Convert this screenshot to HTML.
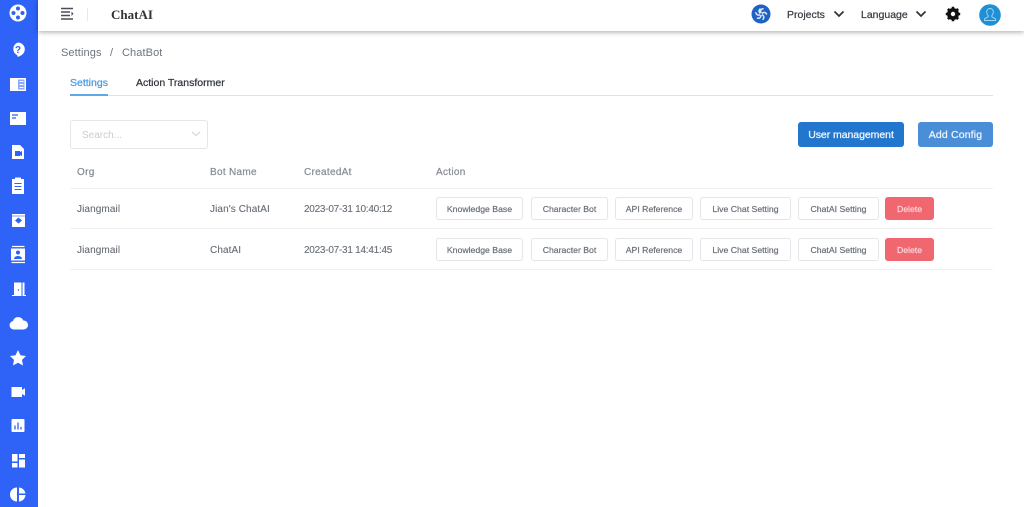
<!DOCTYPE html>
<html><head><meta charset="utf-8"><style>
html,body{margin:0;padding:0;width:1024px;height:507px;overflow:hidden;background:#fff}
body{position:relative;font-family:"Liberation Sans",sans-serif;}
#w{position:absolute;left:0;top:0;width:1024px;height:507px;filter:blur(.3px)}
.t{position:absolute;white-space:nowrap;line-height:14px;height:14px}
.b{position:absolute;box-sizing:border-box;height:23px;border:1px solid #e4e6ea;border-radius:3px;background:#fff;color:#6a7079;font-size:8.700px;line-height:22px;text-align:center;white-space:nowrap;-webkit-text-stroke:.2px #6a7079;box-shadow:0 0 1px rgba(0,0,0,.05)}
.d{background:#f1676f;border-color:#f1676f;color:#fbdde0;-webkit-text-stroke:.15px #fbdde0}
.h{color:#8a8f97;font-size:10px;letter-spacing:.3px;-webkit-text-stroke:.25px #8a8f97}
.c{color:#666c75;font-size:10px;letter-spacing:.1px;-webkit-text-stroke:.1px #666c75}
.m{font-size:10.500px;-webkit-text-stroke:.25px currentColor}
.l{position:absolute;left:70px;width:923px;height:1px;background:#eef0f2}
svg{position:absolute}
</style></head><body><div id="w">
<div style="position:absolute;left:0;top:0;width:38px;height:507px;background:#2f62f6"></div>
<div style="position:absolute;left:38px;top:0;width:986px;height:31px;background:#fff;box-shadow:0 1px 5px rgba(0,0,0,.35)"></div>

<svg width="38" height="507" style="left:0;top:0" fill="#fff">
<circle cx="18" cy="13" r="8.500"/>
<g fill="#2f62f6"><circle cx="18" cy="8.500" r="2"/><circle cx="18" cy="17.500" r="2"/><circle cx="13.500" cy="13" r="2"/><circle cx="22.500" cy="13" r="2"/></g>
<path d="M18 42.500a6.800 6.800 0 0 1 3.600 12.600L18 57l-1-2a6.800 6.800 0 0 1 1-12.500z"/>
<text x="18" y="53" font-size="10" font-weight="700" text-anchor="middle" fill="#2f62f6" font-family="Liberation Sans">?</text>
<path d="M10 78h16v13H10z"/><path d="M18 79.500h6.500v10H18z" fill="#2f62f6" opacity=".55"/><path d="M19.500 81.500h4M19.500 84.500h4M19.500 87.500h4" stroke="#fff" fill="none"/>
<path d="M10 112h16v13H10z"/><path d="M12 115h6M12 118h4" stroke="#2f62f6" stroke-width="1.200" fill="none"/>
<path d="M12 145h8l4 4v10H12z"/><path d="M15 151h5v5h-5zM20 152l2-1v5l-2-1z" fill="#2f62f6"/>
<path d="M12 179h3v-1.500h6V179h3v15H12z"/><path d="M14.500 183.500h7M14.500 186.500h7M14.500 189.500h7" stroke="#2f62f6" stroke-width="1.100" fill="none"/>
<path d="M12 214h13v13H12z"/><path d="M15 220.500l3.500-3 3.500 3-3.500 3z" fill="#2f62f6"/><path d="M12 216h13" stroke="#2f62f6" stroke-width=".6" fill="none"/>
<path d="M12 246.500h12.500M11.500 262.500h13.500" stroke="#fff" stroke-width="1.200" fill="none"/>
<path d="M11 248.500h14v12H11z"/><circle cx="18" cy="252.500" r="2" fill="#2f62f6"/><path d="M14 259c0-4 8-4 8 0z" fill="#2f62f6"/>
<path d="M14 282.500h7.500v13.500H12v-1h2z"/><path d="M22.500 282.500h2v12.500h1.500v1h-3.500z"/><circle cx="18.500" cy="290" r=".8" fill="#2f62f6"/>
<path d="M13.500 329.500a4.300 4.300 0 0 1-.5-8.500 5.500 5.500 0 0 1 10.300-.5 4.500 4.500 0 0 1 .5 9z"/>
<path d="M18 350l2.500 5.300 5.500.7-4 3.900 1 5.600-5-2.700-5 2.700 1-5.600-4-3.900 5.500-.7z"/>
<path d="M11.500 387h10.500v3l3-1.800v7.600l-3-1.800v3H11.500z"/>
<rect x="11.500" y="419" width="13" height="13" rx="1"/><path d="M15 429.500v-4M18 429.500v-7M21 429.500v-2.500" stroke="#2f62f6" stroke-width="1.300" fill="none"/>
<path d="M12 454h5.500v7.500H12zM19 454h6v4h-6zM19 459.500h6v8h-6zM12 463h5.500v4.500H12z"/>
<path d="M17 487.500v14a7 7 0 0 1 0-14zM19 487.500a7 7 0 0 1 6.500 6H19zM19 495h6.500a7 7 0 0 1-6.500 6.500z"/>
</svg>

<svg width="16" height="14" style="left:60px;top:7px" fill="none" stroke="#4a4f57" stroke-width="1.400">
<path d="M1 1.500h12M1 5h9M1 8.500h9M1 12h12"/><path d="M11.500 4.500L13.500 6.700 11.500 9" fill="#4a4f57" stroke="none"/>
</svg>
<div style="position:absolute;left:87px;top:8px;width:1px;height:13px;background:#e8e8e8"></div>
<div class="t" style="left:111px;top:8px;font-family:'Liberation Serif',serif;font-weight:700;font-size:13px;color:#333">ChatAI</div>

<svg width="20" height="20" style="left:751px;top:4px">
<circle cx="10" cy="10" r="9.500" fill="#1f62c6"/>
<g fill="none" stroke="#dfeaf7" stroke-width="1.500" stroke-linecap="round">
<path d="M10 8.500C9 6.500 10 5 12 4.700M11.500 9.200C13 7.800 14.700 8.300 15.500 10M11.500 11C13.200 12 13.200 13.800 12 15.300M10 11.500C9.800 13.500 8.300 14.600 6.500 14.200M8.500 11C6.800 11.500 5.400 10.500 4.800 8.800M8.700 9C7.700 7.500 8 6 9 5"/>
</g></svg>
<div class="t m" style="left:787px;top:7.500px;color:#3b3f46">Projects</div>
<svg width="12" height="8" style="left:833px;top:10px" fill="none" stroke="#333" stroke-width="1.700"><path d="M1.500 1.500L6 6l4.500-4.500"/></svg>
<div class="t m" style="left:861px;top:7.500px;color:#3b3f46">Language</div>
<svg width="12" height="8" style="left:915px;top:10px" fill="none" stroke="#333" stroke-width="1.700"><path d="M1.500 1.500L6 6l4.500-4.500"/></svg>
<svg width="16" height="16" style="left:945px;top:6px" viewBox="0 0 16 16">
<circle cx="8" cy="8" r="4.500" fill="none" stroke="#111" stroke-width="3"/>
<path d="M8 8V.8M8 8v7.200M8 8H.8M8 8h7.200M8 8L2.900 2.900M8 8l5.100 5.100M8 8l5.100-5.100M8 8l-5.100 5.100" stroke="#111" stroke-width="2.600"/>
<circle cx="8" cy="8" r="2.200" fill="#fff"/></svg>
<svg width="22" height="22" style="left:979px;top:4px" fill="none">
<circle cx="11" cy="11" r="10.800" fill="#1f8fd6"/>
<path d="M11 4.500c-2.200 0-3.300 1.700-3.300 3.500 0 1.500.6 2.800 1.500 3.600v1.200l-3.700 2v1.700h11v-1.700l-3.700-2v-1.200c.9-.8 1.500-2.100 1.500-3.600 0-1.800-1.100-3.500-3.300-3.500z" stroke="#a6d5f2" stroke-width=".9"/></svg>

<div class="t" style="left:61px;top:46px;font-size:11px;color:#6b7480;letter-spacing:.1px">Settings</div>
<div class="t" style="left:110px;top:46px;font-size:11px;color:#6b7480">/</div>
<div class="t" style="left:122px;top:46px;font-size:11px;color:#6b7480;letter-spacing:.1px">ChatBot</div>

<div class="t m" style="left:70px;top:75.500px;color:#4a9be0">Settings</div>
<div class="t m" style="left:136px;top:75.500px;color:#33373d">Action Transformer</div>
<div style="position:absolute;left:70px;top:95px;width:923px;height:1px;background:#dfe2e6"></div>
<div style="position:absolute;left:70px;top:94px;width:38px;height:2px;background:#5fa8e6"></div>

<div style="position:absolute;box-sizing:border-box;left:70px;top:120px;width:138px;height:29px;border:1px solid #e3e6ea;border-radius:3px;background:#fff"></div>
<div class="t" style="left:82px;top:128.500px;font-size:10px;color:#c8ccd2;">Search...</div>
<svg width="10" height="6" style="left:191px;top:131px" fill="none" stroke="#ccd0d5"><path d="M1 1l4 3.500L9 1"/></svg>

<div class="m" style="position:absolute;left:798px;top:122px;width:106px;height:25px;background:#2276ce;border-radius:3px;color:#e9f2fb;line-height:26px;text-align:center;letter-spacing:-.05px;-webkit-text-stroke:.3px #e9f2fb">User management</div>
<div class="m" style="position:absolute;left:918px;top:122px;width:75px;height:25px;background:#4a8ed8;border-radius:3px;color:#e9f2fb;line-height:26px;text-align:center;letter-spacing:.15px;-webkit-text-stroke:.3px #e9f2fb">Add Config</div>

<div class="t h" style="left:77px;top:165.500px">Org</div>
<div class="t h" style="left:210px;top:165.500px">Bot Name</div>
<div class="t h" style="left:304px;top:165.500px">CreatedAt</div>
<div class="t h" style="left:436px;top:165.500px">Action</div>
<div class="l" style="top:188px"></div>
<div class="l" style="top:228px"></div>
<div class="l" style="top:269px"></div>

<div class="t c" style="left:77px;top:203px">Jiangmail</div>
<div class="t c" style="left:210px;top:203px">Jian's ChatAI</div>
<div class="t c" style="left:304px;top:203px;letter-spacing:-.25px">2023-07-31 10:40:12</div>
<div class="b" style="left:436px;top:197px;width:87px">Knowledge Base</div>
<div class="b" style="left:531px;top:197px;width:77px">Character Bot</div>
<div class="b" style="left:615px;top:197px;width:78px">API Reference</div>
<div class="b" style="left:700px;top:197px;width:91px">Live Chat Setting</div>
<div class="b" style="left:798px;top:197px;width:81px">ChatAI Setting</div>
<div class="b d" style="left:885px;top:197px;width:49px">Delete</div>

<div class="t c" style="left:77px;top:243.500px">Jiangmail</div>
<div class="t c" style="left:210px;top:243.500px">ChatAI</div>
<div class="t c" style="left:304px;top:243.500px;letter-spacing:-.25px">2023-07-31 14:41:45</div>
<div class="b" style="left:436px;top:238px;width:87px">Knowledge Base</div>
<div class="b" style="left:531px;top:238px;width:77px">Character Bot</div>
<div class="b" style="left:615px;top:238px;width:78px">API Reference</div>
<div class="b" style="left:700px;top:238px;width:91px">Live Chat Setting</div>
<div class="b" style="left:798px;top:238px;width:81px">ChatAI Setting</div>
<div class="b d" style="left:885px;top:238px;width:49px">Delete</div>
</div></body></html>
